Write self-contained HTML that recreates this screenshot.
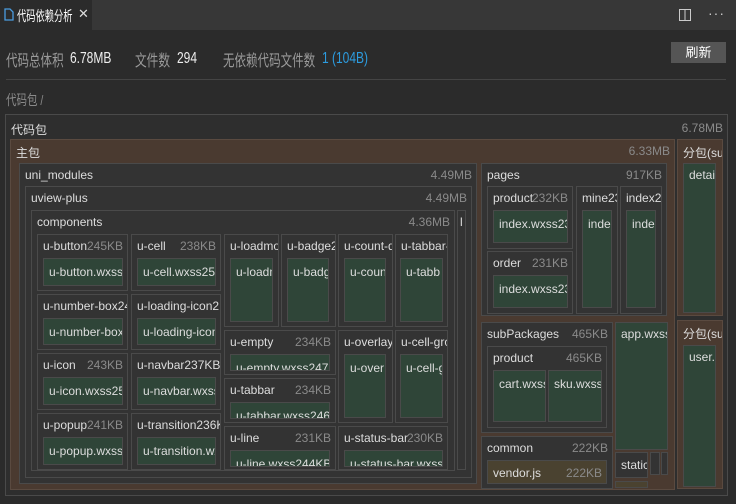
<!DOCTYPE html><html><head><meta charset="utf-8"><style>
*{box-sizing:border-box;margin:0;padding:0}
body{width:736px;height:504px;background:#2b2b2b;font-family:"Liberation Sans","Noto Sans CJK SC",sans-serif;color:#ccc;position:relative;overflow:hidden;font-size:12px}
.a{position:absolute;white-space:nowrap}
.c{transform-origin:0 0;transform:scaleX(0.82)}
.b{position:absolute;border:1px solid #4a4a4a;background:#333;overflow:hidden;white-space:nowrap}
.b>.l{position:absolute;left:5px;top:4px;color:#ddd;font-size:12px}
.b>.s{position:absolute;right:4px;top:4px;color:#8a8a8a;font-size:12px}
.g{background:#2f4538;border-color:#4a4a4a}
.br{background:#4a3a30;border-color:#5a4a40}
.o{background:#4a4230}
</style></head><body>
<div class="a" style="left:0;top:0;width:736px;height:30px;background:#373737"></div>
<div class="a" style="left:0;top:0;width:92px;height:30px;background:#2b2b2b"></div>
<svg class="a" style="left:4px;top:8px" width="10" height="13"><path d="M1 1h5l3 3v8H1z" fill="none" stroke="#4a9ce0" stroke-width="1.3"/></svg>
<div class="a c" style="left:17px;top:6px;color:#fff;font-size:14px;transform:scaleX(0.66)">代码依赖分析</div>
<div class="a" style="left:78px;top:6px;color:#ddd;font-size:13px">✕</div>
<svg class="a" style="left:679px;top:9px" width="12" height="12"><rect x="0.5" y="0.5" width="11" height="11" fill="none" stroke="#ccc"/><line x1="6" y1="0" x2="6" y2="12" stroke="#ccc"/></svg>
<div class="a" style="left:708px;top:5px;color:#ccc;font-size:14px;letter-spacing:1px">···</div>
<div class="a c" style="left:6px;top:47px;font-size:16px;color:#9a9a9a;transform:scaleX(0.72)">代码总体积</div>
<div class="a c" style="left:70px;top:50px;font-size:16px;color:#eee;transform:scaleX(0.75)">6.78MB</div>
<div class="a c" style="left:135px;top:47px;font-size:16px;color:#9a9a9a;transform:scaleX(0.73)">文件数</div>
<div class="a c" style="left:177px;top:50px;font-size:16px;color:#eee;transform:scaleX(0.75)">294</div>
<div class="a c" style="left:223px;top:47px;font-size:16px;color:#9a9a9a;transform:scaleX(0.72)">无依赖代码文件数</div>
<div class="a c" style="left:322px;top:50px;font-size:16px;color:#2c9ce0;transform:scaleX(0.75)">1 (104B)</div>
<div class="a" style="left:671px;top:42px;width:55px;height:21px;background:#555;color:#fff;font-size:13px;text-align:center;line-height:21px">刷新</div>
<div class="a" style="left:6px;top:79px;width:720px;height:1px;background:#444"></div>
<div class="a c" style="left:6px;top:90px;color:#8a8a8a;font-size:14px;transform:scaleX(0.75)">代码包 /</div>

<div class="b" style="left:5px;top:114px;width:723px;height:382px;background:#2e2e2e"><span class="l" style="top:6px">代码包</span><span class="s" style="top:6px">6.78MB</span></div>
<div class="b br" style="left:10px;top:139px;width:665px;height:351px"><span class="l">主包</span><span class="s">6.33MB</span></div>
<div class="b br" style="left:677px;top:139px;width:46px;height:177px"><span class="l">分包(su</span></div>
<div class="b g" style="left:683px;top:163px;width:33px;height:150px"><span class="l">detai</span></div>
<div class="b br" style="left:677px;top:320px;width:46px;height:169px"><span class="l">分包(su</span></div>
<div class="b g" style="left:683px;top:345px;width:33px;height:142px"><span class="l">user.</span></div>

<div class="b" style="left:19px;top:163px;width:458px;height:321px"><span class="l">uni_modules</span><span class="s">4.49MB</span></div>
<div class="b" style="left:25px;top:186px;width:447px;height:292px"><span class="l">uview-plus</span><span class="s">4.49MB</span></div>
<div class="b" style="left:31px;top:210px;width:424px;height:261px"><span class="l">components</span><span class="s">4.36MB</span></div>
<div class="b" style="left:457px;top:210px;width:9px;height:260px"><span class="l" style="left:2px">l</span></div>

<div class="b" style="left:37px;top:234px;width:91px;height:57px"><span class="l">u-button</span><span class="s">245KB</span></div>
<div class="b g" style="left:43px;top:258px;width:80px;height:28px"><span class="l" style="top:6px">u-button.wxss</span></div>
<div class="b" style="left:37px;top:294px;width:91px;height:56px"><span class="l">u-number-box24</span></div>
<div class="b g" style="left:43px;top:318px;width:80px;height:27px"><span class="l" style="top:6px">u-number-box</span></div>
<div class="b" style="left:37px;top:353px;width:91px;height:57px"><span class="l">u-icon</span><span class="s">243KB</span></div>
<div class="b g" style="left:43px;top:377px;width:80px;height:28px"><span class="l" style="top:6px">u-icon.wxss25</span></div>
<div class="b" style="left:37px;top:413px;width:91px;height:57px"><span class="l">u-popup</span><span class="s">241KB</span></div>
<div class="b g" style="left:43px;top:437px;width:80px;height:28px"><span class="l" style="top:6px">u-popup.wxss</span></div>

<div class="b" style="left:131px;top:234px;width:90px;height:57px"><span class="l">u-cell</span><span class="s">238KB</span></div>
<div class="b g" style="left:137px;top:258px;width:79px;height:28px"><span class="l" style="top:6px">u-cell.wxss251</span></div>
<div class="b" style="left:131px;top:294px;width:90px;height:56px"><span class="l">u-loading-icon2</span></div>
<div class="b g" style="left:137px;top:318px;width:79px;height:27px"><span class="l" style="top:6px">u-loading-icon</span></div>
<div class="b" style="left:131px;top:353px;width:90px;height:57px"><span class="l">u-navbar237KB</span></div>
<div class="b g" style="left:137px;top:377px;width:79px;height:28px"><span class="l" style="top:6px">u-navbar.wxss</span></div>
<div class="b" style="left:131px;top:413px;width:90px;height:57px"><span class="l">u-transition236KB</span></div>
<div class="b g" style="left:137px;top:437px;width:79px;height:28px"><span class="l" style="top:6px">u-transition.wxss</span></div>

<div class="b" style="left:224px;top:234px;width:55px;height:93px"><span class="l">u-loadmore</span></div>
<div class="b g" style="left:230px;top:258px;width:43px;height:64px"><span class="l" style="top:6px">u-loadmore</span></div>
<div class="b" style="left:281px;top:234px;width:55px;height:93px"><span class="l">u-badge2</span></div>
<div class="b g" style="left:287px;top:258px;width:42px;height:64px"><span class="l" style="top:6px">u-badge</span></div>
<div class="b" style="left:224px;top:330px;width:112px;height:45px"><span class="l">u-empty</span><span class="s">234KB</span></div>
<div class="b g" style="left:230px;top:354px;width:100px;height:17px"><span class="l" style="top:6px">u-empty.wxss247KB</span></div>
<div class="b" style="left:224px;top:378px;width:112px;height:45px"><span class="l">u-tabbar</span><span class="s">234KB</span></div>
<div class="b g" style="left:230px;top:402px;width:100px;height:17px"><span class="l" style="top:6px">u-tabbar.wxss246</span></div>
<div class="b" style="left:224px;top:426px;width:112px;height:44px"><span class="l">u-line</span><span class="s">231KB</span></div>
<div class="b g" style="left:230px;top:450px;width:100px;height:17px"><span class="l" style="top:6px">u-line.wxss244KB</span></div>

<div class="b" style="left:338px;top:234px;width:55px;height:93px"><span class="l">u-count-down</span></div>
<div class="b g" style="left:344px;top:258px;width:42px;height:64px"><span class="l" style="top:6px">u-count</span></div>
<div class="b" style="left:395px;top:234px;width:53px;height:93px"><span class="l">u-tabbar-item</span></div>
<div class="b g" style="left:400px;top:258px;width:43px;height:64px"><span class="l" style="top:6px">u-tabb</span></div>
<div class="b" style="left:338px;top:330px;width:55px;height:93px"><span class="l">u-overlay</span></div>
<div class="b g" style="left:344px;top:354px;width:42px;height:64px"><span class="l" style="top:6px">u-over</span></div>
<div class="b" style="left:395px;top:330px;width:53px;height:93px"><span class="l">u-cell-group</span></div>
<div class="b g" style="left:400px;top:354px;width:43px;height:64px"><span class="l" style="top:6px">u-cell-g</span></div>
<div class="b" style="left:338px;top:426px;width:110px;height:44px"><span class="l">u-status-bar</span><span class="s">230KB</span></div>
<div class="b g" style="left:344px;top:450px;width:99px;height:17px"><span class="l" style="top:6px">u-status-bar.wxss</span></div>

<div class="b" style="left:481px;top:163px;width:186px;height:153px"><span class="l">pages</span><span class="s">917KB</span></div>
<div class="b" style="left:487px;top:186px;width:86px;height:63px"><span class="l">product</span><span class="s">232KB</span></div>
<div class="b g" style="left:493px;top:210px;width:75px;height:33px"><span class="l" style="top:6px">index.wxss23</span></div>
<div class="b" style="left:487px;top:251px;width:86px;height:63px"><span class="l">order</span><span class="s">231KB</span></div>
<div class="b g" style="left:493px;top:275px;width:75px;height:33px"><span class="l" style="top:6px">index.wxss23</span></div>
<div class="b" style="left:576px;top:186px;width:42px;height:128px"><span class="l">mine23</span></div>
<div class="b g" style="left:582px;top:210px;width:30px;height:98px"><span class="l" style="top:6px">inde</span></div>
<div class="b" style="left:620px;top:186px;width:42px;height:128px"><span class="l">index2</span></div>
<div class="b g" style="left:626px;top:210px;width:30px;height:98px"><span class="l" style="top:6px">inde</span></div>

<div class="b" style="left:481px;top:322px;width:132px;height:111px"><span class="l">subPackages</span><span class="s">465KB</span></div>
<div class="b" style="left:487px;top:346px;width:120px;height:82px"><span class="l">product</span><span class="s">465KB</span></div>
<div class="b g" style="left:493px;top:370px;width:53px;height:52px"><span class="l" style="top:6px">cart.wxss</span></div>
<div class="b g" style="left:548px;top:370px;width:54px;height:52px"><span class="l" style="top:6px">sku.wxss2</span></div>
<div class="b" style="left:481px;top:436px;width:132px;height:53px"><span class="l">common</span><span class="s">222KB</span></div>
<div class="b o" style="left:487px;top:460px;width:120px;height:24px"><span class="l" style="top:5px">vendor.js</span><span class="s" style="top:5px">222KB</span></div>
<div class="b g" style="left:615px;top:322px;width:53px;height:128px"><span class="l">app.wxss</span></div>
<div class="b" style="left:615px;top:452px;width:33px;height:26px"><span class="l" style="top:5px">static</span></div>
<div class="b" style="left:650px;top:452px;width:10px;height:23px"></div>
<div class="b" style="left:661px;top:452px;width:7px;height:23px"></div>
<div class="b o" style="left:615px;top:481px;width:33px;height:7px"></div>
</body></html>
